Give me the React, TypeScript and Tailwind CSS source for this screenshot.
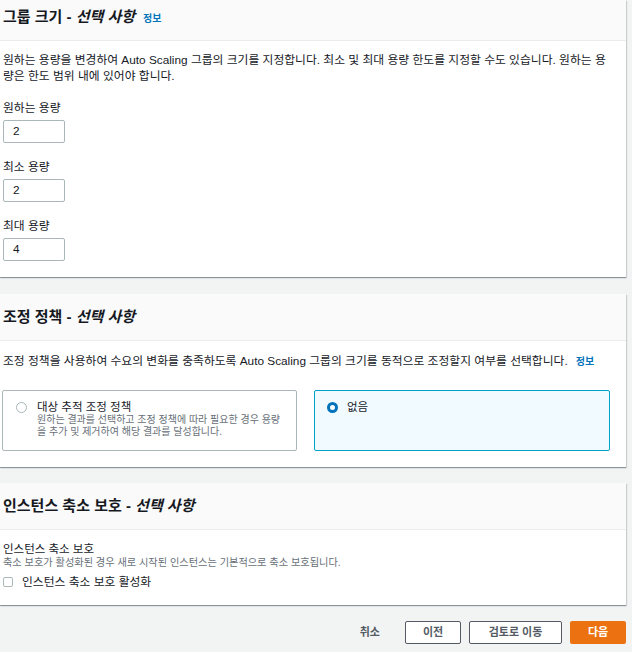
import { useState } from "react";

const font = { fontFamily: '"Liberation Sans", "Noto Sans CJK KR", sans-serif' };

const Panel = ({
  title,
  info,
  first,
  children,
}: {
  title: string;
  info?: boolean;
  first?: boolean;
  children: React.ReactNode;
}) => (
  <section className="w-[626px] bg-white shadow-[0_1px_1px_0_rgba(0,28,36,0.35),1px_1px_1px_0_rgba(0,28,36,0.12)]">
    <header
      className={`flex items-center px-[3px] bg-[#fafafa] border-b border-[#eaeded] ${
        first ? "h-[41px] pb-[5px]" : "h-[47px]"
      }`}
    >
      <h2 className="text-[15px] font-bold text-[#16191f] flex items-baseline">
        <span>{title} -&nbsp;</span>
        <i>선택 사항</i>
        {info && <span className="ml-[8px] text-[10px] text-[#0073bb] font-bold">정보</span>}
      </h2>
    </header>
    {children}
  </section>
);

const Field = ({ label, value }: { label: string; value: string }) => (
  <div className="flex flex-col">
    <label className="text-[11.8px] leading-4 text-[#16191f] mb-[4px]">{label}</label>
    <div className="w-[62px] h-[23px] border border-[#aab7b8] rounded-[2px] flex items-center px-[9px] text-[11.8px] text-[#16191f]">
      {value}
    </div>
  </div>
);

export default function App() {
  const [choice, setChoice] = useState("none");
  const [protect, setProtect] = useState(false);

  return (
    <div className="min-h-[652px] w-[632px] bg-[#f2f3f3] flex flex-col" style={font}>
      <Panel title="그룹 크기" info first>
        <div className="px-[3px] pt-[11px] pb-[16px] flex flex-col">
          <p className="text-[11.8px] leading-4 text-[#16191f] pr-[16px]">
            원하는 용량을 변경하여 Auto Scaling 그룹의 크기를 지정합니다. 최소 및 최대 용량 한도를 지정할 수도 있습니다. 원하는 용량은 한도 범위 내에 있어야 합니다.
          </p>
          <div className="mt-[16px] flex flex-col gap-[16px]">
            <Field label="원하는 용량" value="2" />
            <Field label="최소 용량" value="2" />
            <Field label="최대 용량" value="4" />
          </div>
        </div>
      </Panel>

      <div className="h-[17px] shrink-0" />

      <Panel title="조정 정책">
        <div className="pl-[2px] pr-[16px] pt-[12px] pb-[16px]">
          <p className="pl-[1px] text-[11.8px] leading-4 text-[#16191f]">
            조정 정책을 사용하여 수요의 변화를 충족하도록 Auto Scaling 그룹의 크기를 동적으로 조정할지 여부를 선택합니다.
            <span className="ml-[8px] text-[10px] font-bold text-[#0073bb]">정보</span>
          </p>
          <div className="mt-[20px] flex gap-[17px]">
            <button
              onClick={() => setChoice("target")}
              className={`w-[295px] shrink-0 h-[61px] text-left rounded-[2px] flex items-start gap-[10px] pl-[13px] pr-[12px] pt-[10px] ${
                choice === "target" ? "border border-[#00a1c9] bg-[#f1faff]" : "border border-[#aab7b8] bg-white"
              }`}
            >
              <span
                className={`mt-[1px] w-[11px] h-[11px] shrink-0 rounded-full ${
                  choice === "target" ? "border-[3px] border-[#0073bb] bg-white" : "border border-[#aab7b8]"
                }`}
              />
              <span className="flex flex-col">
                <span className="text-[11.5px] leading-[13px] text-[#16191f]">대상 추적 조정 정책</span>
                <span className="text-[10px] leading-[12px] text-[#687078]">
                  원하는 결과를 선택하고 조정 정책에 따라 필요한 경우 용량을 추가 및 제거하여 해당 결과를 달성합니다.
                </span>
              </span>
            </button>
            <button
              onClick={() => setChoice("none")}
              className={`w-[296px] shrink-0 h-[61px] text-left rounded-[2px] flex items-start gap-[9px] pl-[12px] pt-[10px] ${
                choice === "none" ? "border border-[#00a1c9] bg-[#f1faff]" : "border border-[#aab7b8] bg-white"
              }`}
            >
              <span
                className={`mt-[1px] w-[11px] h-[11px] shrink-0 rounded-full ${
                  choice === "none" ? "border-[3px] border-[#0073bb] bg-white" : "border border-[#aab7b8]"
                }`}
              />
              <span className="text-[11.5px] leading-[13px] text-[#16191f]">없음</span>
            </button>
          </div>
        </div>
      </Panel>

      <div className="h-[16px] shrink-0" />

      <Panel title="인스턴스 축소 보호">
        <div className="px-[3px] pt-[12px] pb-[16px]">
          <div className="text-[11.5px] leading-[14px] text-[#16191f]">인스턴스 축소 보호</div>
          <div className="text-[10.2px] leading-[14px] text-[#687078]">
            축소 보호가 활성화된 경우 새로 시작된 인스턴스는 기본적으로 축소 보호됩니다.
          </div>
          <label className="mt-[5px] h-[14px] flex items-center gap-[9px] cursor-pointer">
            <input
              type="checkbox"
              checked={protect}
              onChange={(e) => setProtect(e.target.checked)}
              className="appearance-none w-[10px] h-[10px] border border-[#aab7b8] rounded-[2px] checked:bg-[#0073bb] checked:border-[#0073bb]"
            />
            <span className="text-[11.8px] leading-[14px] text-[#16191f]">인스턴스 축소 보호 활성화</span>
          </label>
        </div>
      </Panel>

      <footer className="w-[626px] flex items-center justify-end gap-[8px] mt-[16px]">
        <button className="text-[11px] font-bold text-[#545b64] mr-[17px]">취소</button>
        <button className="w-[56px] h-[23px] border border-[#545b64] rounded-[2px] bg-white text-[11px] font-bold text-[#545b64]">
          이전
        </button>
        <button className="w-[93px] h-[23px] border border-[#545b64] rounded-[2px] bg-white text-[11px] font-bold text-[#545b64]">
          검토로 이동
        </button>
        <button className="w-[56px] h-[23px] rounded-[2px] bg-[#ec7211] text-[11px] font-bold text-white">
          다음
        </button>
      </footer>
    </div>
  );
}
